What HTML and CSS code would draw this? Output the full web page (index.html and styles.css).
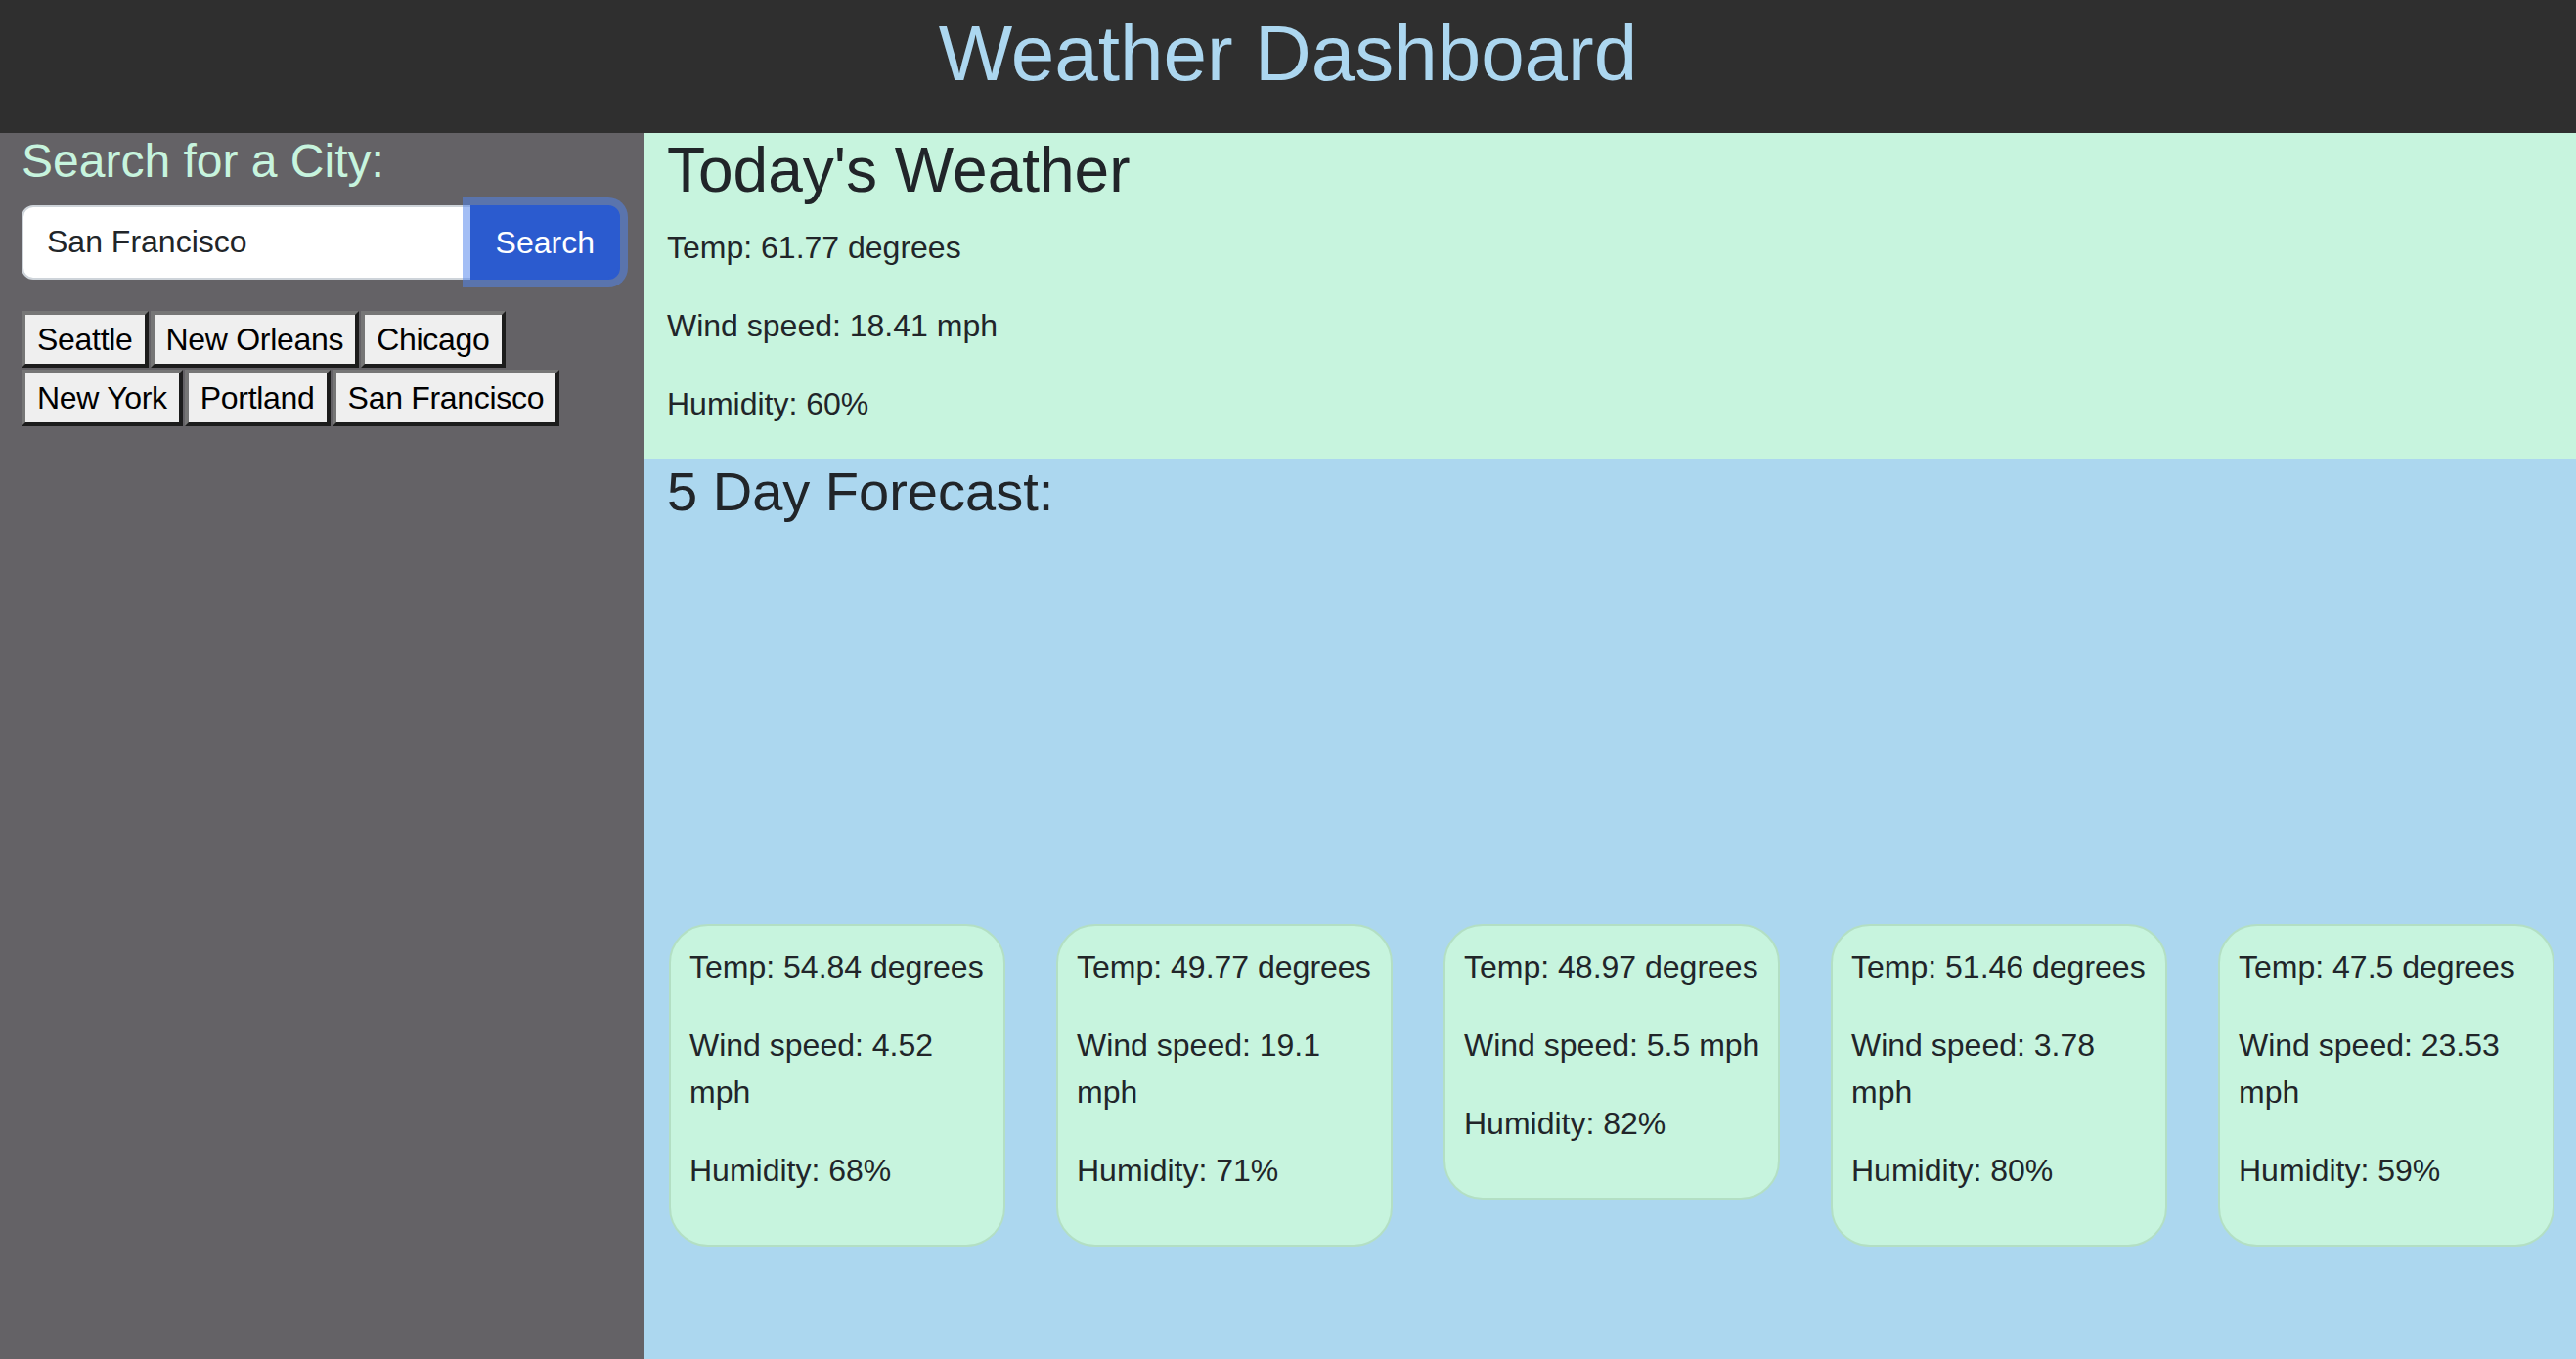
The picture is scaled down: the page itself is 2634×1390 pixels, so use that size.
FILE: index.html
```html
<!DOCTYPE html>
<html lang="en">
<head>
<meta charset="utf-8">
<title>Weather Dashboard</title>
<link rel="stylesheet" href="styles.css">
</head>
<body>
<header class="top-bar">
  <h1 class="title">Weather Dashboard</h1>
</header>
<div class="layout">
  <aside class="sidebar">
    <h4 class="search-title">Search for a City:</h4>
    <div class="input-group">
      <input class="city-input" type="text" value="San Francisco">
      <button class="search-btn" type="button">Search</button>
    </div>
    <div class="history">
      <button class="city-btn" type="button">Seattle</button>
      <button class="city-btn" type="button">New Orleans</button>
      <button class="city-btn" type="button">Chicago</button>
      <button class="city-btn" type="button">New York</button>
      <button class="city-btn" type="button">Portland</button>
      <button class="city-btn" type="button">San Francisco</button>
    </div>
  </aside>
  <main class="main">
    <section class="today">
      <h2 class="today-title">Today's Weather</h2>
      <p class="stat">Temp: 61.77 degrees</p>
      <p class="stat">Wind speed: 18.41 mph</p>
      <p class="stat">Humidity: 60%</p>
    </section>
    <section class="forecast">
      <h3 class="forecast-title">5 Day Forecast:</h3>
      <div class="cards">
        <div class="card">
          <p class="stat">Temp: 54.84 degrees</p>
          <p class="stat">Wind speed: 4.52 mph</p>
          <p class="stat">Humidity: 68%</p>
        </div>
        <div class="card">
          <p class="stat">Temp: 49.77 degrees</p>
          <p class="stat">Wind speed: 19.1 mph</p>
          <p class="stat">Humidity: 71%</p>
        </div>
        <div class="card">
          <p class="stat">Temp: 48.97 degrees</p>
          <p class="stat">Wind speed: 5.5 mph</p>
          <p class="stat">Humidity: 82%</p>
        </div>
        <div class="card">
          <p class="stat">Temp: 51.46 degrees</p>
          <p class="stat">Wind speed: 3.78 mph</p>
          <p class="stat">Humidity: 80%</p>
        </div>
        <div class="card">
          <p class="stat">Temp: 47.5 degrees</p>
          <p class="stat">Wind speed: 23.53 mph</p>
          <p class="stat">Humidity: 59%</p>
        </div>
      </div>
    </section>
  </main>
</div>
</body>
</html>
```
FILE: styles.css
```css
* {
  box-sizing: border-box;
}

html, body {
  margin: 0;
  padding: 0;
}

body {
  font-family: "Liberation Sans", Arial, Helvetica, sans-serif;
  font-size: 32px;
  line-height: 1.5;
  color: #212529;
  background: #646266;
  min-height: 100vh;
  display: flex;
  flex-direction: column;
}

.top-bar {
  height: 136px;
  background: #2f2f2f;
  padding-top: 7px;
}

.title {
  margin: 0;
  text-align: center;
  font-size: 80px;
  line-height: 1.2;
  font-weight: 400;
  color: #acd7f0;
}

.layout {
  flex: 1;
  display: flex;
}

.sidebar {
  width: 658px;
  flex: 0 0 658px;
  background: #646266;
  padding: 0 24px 0 22px;
}

.search-title {
  margin: 0 0 16px;
  font-size: 48px;
  line-height: 1.2;
  font-weight: 400;
  color: #c7f4de;
}

.input-group {
  display: flex;
  align-items: stretch;
}

.city-input {
  flex: 1;
  min-width: 0;
  height: 76px;
  font-family: inherit;
  font-size: 32px;
  line-height: 1.5;
  color: #212529;
  background: #ffffff;
  border: 2px solid #ced4da;
  border-radius: 12px 0 0 12px;
  padding: 12px 24px;
  outline: none;
}

.search-btn {
  position: relative;
  margin-left: -2px;
  height: 76px;
  font-family: inherit;
  font-size: 32px;
  line-height: 1.5;
  color: #ffffff;
  background: #2b5bcf;
  border: 2px solid #2b5bcf;
  border-radius: 0 12px 12px 0;
  padding: 12px 24px;
  box-shadow: 0 0 0 8px rgba(81, 132, 236, 0.53);
}

.history {
  margin-top: 32px;
  display: flex;
  flex-wrap: wrap;
  column-gap: 2px;
  row-gap: 2px;
  max-width: 600px;
}

.city-btn {
  font-family: inherit;
  font-size: 32px;
  line-height: 37px;
  letter-spacing: -0.3px;
  color: #000000;
  background: #efefef;
  padding: 7px 12px 6px;
  border-width: 4px;
  border-style: solid;
  border-color: #767676 #1c1c1c #1c1c1c #767676;
  border-radius: 0;
}

.main {
  flex: 1;
  display: flex;
  flex-direction: column;
}

.today {
  background: #c7f4de;
  padding: 0 24px;
}

.today-title {
  margin: 0 0 16px;
  font-size: 64px;
  line-height: 1.2;
  font-weight: 400;
}

.stat {
  margin: 0 0 32px;
}

.forecast {
  flex: 1;
  background: #acd7ef;
  padding: 0 22px 0 24px;
}

.forecast-title {
  margin: 0 0 16px;
  font-size: 56px;
  line-height: 1.2;
  font-weight: 400;
}

.cards {
  margin-top: 409px;
  padding-left: 2px;
  display: flex;
  align-items: flex-start;
  gap: 52px;
}

.card {
  width: 344px;
  flex: 0 0 344px;
  background: #c7f4de;
  border: 2px solid #b3dfc4;
  border-radius: 40px;
  padding: 18px 16px 20px 19px;
}
```
